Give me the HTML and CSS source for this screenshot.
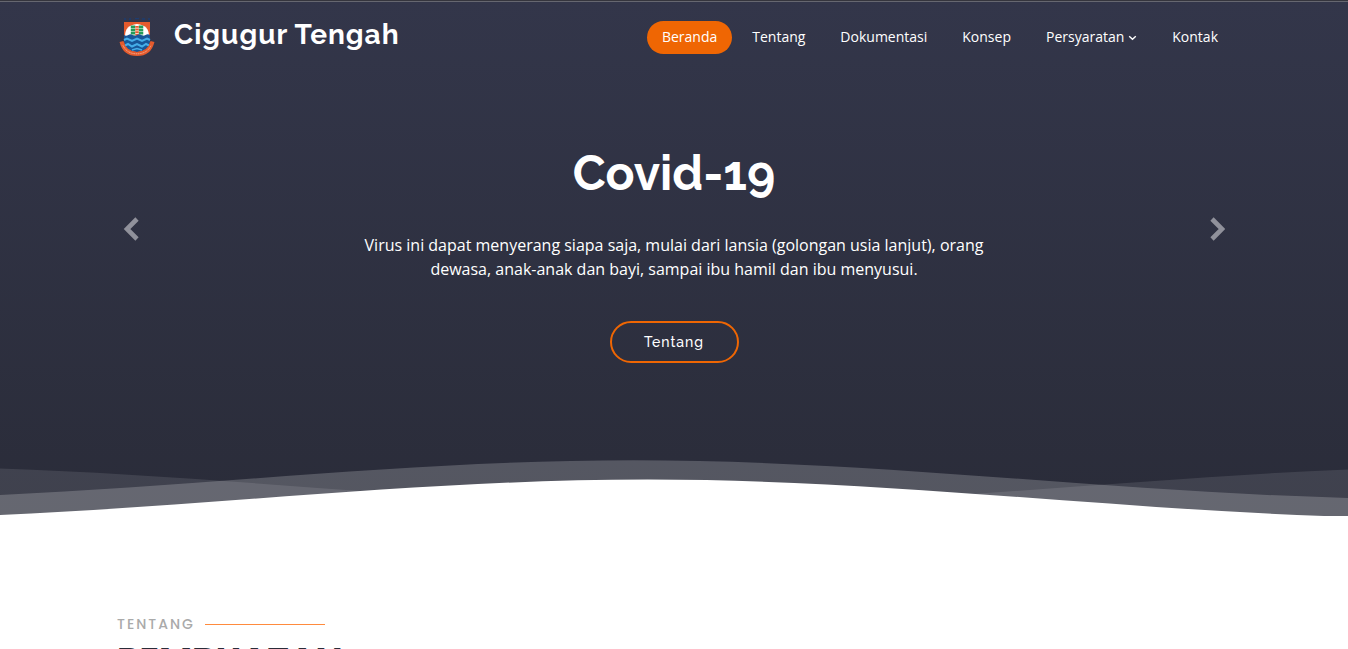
FILE: index.html
```html
<!DOCTYPE html>
<html lang="id">
<head>
<meta charset="utf-8">
<title>Cigugur Tengah</title>
<link rel="stylesheet" href="styles.css">
</head>
<body>
<div class="hero">
  <header class="header">
    <a class="brand">
      <svg class="logo" viewBox="0 0 36 40" aria-hidden="true">
        <path d="M5 1h2M10 1h2M16 .5h4M23 1h3M29 1h2" stroke="#1d3c70" stroke-width="1.500"/>
        <path d="M5 4h26v18q0 10-13 14Q5 32 5 22z" fill="#e55b2d"/>
        <path d="M6 18q0-11 12-12 12 1 12 12v5H6z" fill="#fff"/>
        <path d="M14 7.500v10M22 7.500v10" stroke="#239b58" stroke-width="4.500" stroke-dasharray="2.600 .4"/>
        <path d="M18 8v10" stroke="#e55b2d" stroke-width="3.500" stroke-dasharray="1.800 .8"/>
        <path d="M5 17q2 1.500 4.300 0t4.300 0 4.300 0 4.300 0 4.300 0 4.500 0v7q-2 9-13 10Q7 33 5 24z" fill="#175798"/>
        <path d="M5 22l3-1.500 5 2.500 5-2.500 5 2.500 5-2.500 3 1.500M6 27.500l3-1.500 4 2.500 5-2.500 5 2.500 4-2.500 3 1.500" fill="none" stroke="#45aee8" stroke-width="2"/>
        <path d="M13 32l5-1.500 5 1.500" fill="none" stroke="#45aee8" stroke-width="1.500"/>
        <path d="M2.500 23.500q3 12.500 15.500 12.500t15.500-12.500" fill="none" stroke="#e55b2d" stroke-width="4"/>
        <path d="M4 27.500q4 8.300 14 8.300t14-8.300" fill="none" stroke="#f4b39a" stroke-width="1" stroke-dasharray="1.200 .6"/>
      </svg>
      <span class="brand-name">Cigugur Tengah</span>
    </a>
    <nav class="nav">
      <a class="nav-link active">Beranda</a>
      <a class="nav-link">Tentang</a>
      <a class="nav-link">Dokumentasi</a>
      <a class="nav-link">Konsep</a>
      <a class="nav-link">Persyaratan<svg class="caret" viewBox="0 0 9 6"><path d="M1.200 1.200l3.300 3 3.300-3" fill="none" stroke="currentColor" stroke-width="1.400"/></svg></a>
      <a class="nav-link">Kontak</a>
    </nav>
  </header>
  <main class="slide">
    <svg class="arrow" viewBox="0 0 16 24"><path d="M14 2L4 12l10 10" fill="none" stroke="currentColor" stroke-width="4.600"/></svg>
    <div class="slide-body">
      <h1 class="title">Covid-19</h1>
      <p class="lead">Virus ini dapat menyerang siapa saja, mulai dari lansia (golongan usia lanjut), orang<br>dewasa, anak-anak dan bayi, sampai ibu hamil dan ibu menyusui.</p>
      <a class="button">Tentang</a>
    </div>
    <svg class="arrow" viewBox="0 0 16 24"><path d="M3 2l10 10L3 22" fill="none" stroke="currentColor" stroke-width="4.600"/></svg>
  </main>
  <svg class="waves" viewBox="0 24 150 28" preserveAspectRatio="none">
    <defs><path id="wave" d="M-160 44c30 0 58-18 88-18s58 18 88 18 58-18 88-18 58 18 88 18v44h-352z"/></defs>
    <use href="#wave" x="60.500" y="3" fill="rgba(255,255,255,.1)"/>
    <use href="#wave" x="-33.500" y="0" fill="rgba(255,255,255,.2)"/>
    <use href="#wave" x="-31.900" y="9" fill="#fff"/>
  </svg>
</div>
<section class="about">
  <h2 class="eyebrow">Tentang</h2>
  <p class="about-title">Pembuatan</p>
</section>
</body>
</html>
```
FILE: styles.css
```css
* { box-sizing: border-box; }
body {
  margin: 0;
  height: 649px;
  overflow: hidden;
  background: #fff;
  color: #fff;
  font-family: "Open Sans", sans-serif;
}
.hero {
  height: 516px;
  display: flex;
  flex-direction: column;
  border-top: 1px solid #35353d;
  background: linear-gradient(0deg, #2a2c39, #33364a);
  box-shadow: inset 0 1px #666770;
}
.header {
  height: 72px;
  padding: 0 115px 0 119px;
  display: flex;
  align-items: center;
  justify-content: space-between;
}
.brand { display: flex; align-items: center; gap: 19px; }
.logo { width: 36px; height: 40px; margin-top: 1px; }
.brand-name {
  font: 700 28px/34px Raleway, Lato, sans-serif;
  letter-spacing: 1px;
  margin-top: -5px;
}
.nav { display: flex; gap: 5px; }
.nav-link {
  height: 33px;
  padding: 0 15px 2px;
  display: flex;
  align-items: center;
  border-radius: 50px;
  font-size: 14px;
}
.active { background: #ef6603; }
.caret { width: 9px; height: 6px; margin: 3px 0 0 4px; }
.slide {
  height: 383px;
  padding: 0 123px;
  display: flex;
  justify-content: space-between;
}
.arrow { width: 16px; height: 24px; margin-top: 144px; color: #90919b; }
.slide-body {
  display: flex;
  flex-direction: column;
  align-items: center;
  padding-top: 71px;
}
.title {
  margin: 0 0 31px;
  font: 700 48px/58px Raleway, Lato, sans-serif;
  white-space: nowrap;
}
.lead {
  margin: 0 0 40px;
  text-align: center;
  font-size: 16px;
  line-height: 24px;
  white-space: nowrap;
}
.button {
  width: 129px;
  height: 42px;
  display: flex;
  align-items: center;
  justify-content: center;
  border: 2px solid #ef6603;
  border-radius: 50px;
  font: 500 14px/1 Raleway, sans-serif;
  letter-spacing: 1px;
}
.waves { display: block; width: 100%; height: 60px; }
.about { padding: 98px 117px 0; }
.eyebrow {
  margin: 0 0 6px;
  display: flex;
  align-items: center;
  gap: 10px;
  color: #aaa;
  font: 500 14px/20px Poppins, Inter, sans-serif;
  letter-spacing: 2px;
  text-transform: uppercase;
}
.eyebrow::after { content: ""; width: 120px; height: 1px; background: #ff8b3e; }
.about-title {
  margin: 0;
  color: #2a2c39;
  font: 700 36px/43px Poppins, Inter, sans-serif;
  text-transform: uppercase;
}
```
